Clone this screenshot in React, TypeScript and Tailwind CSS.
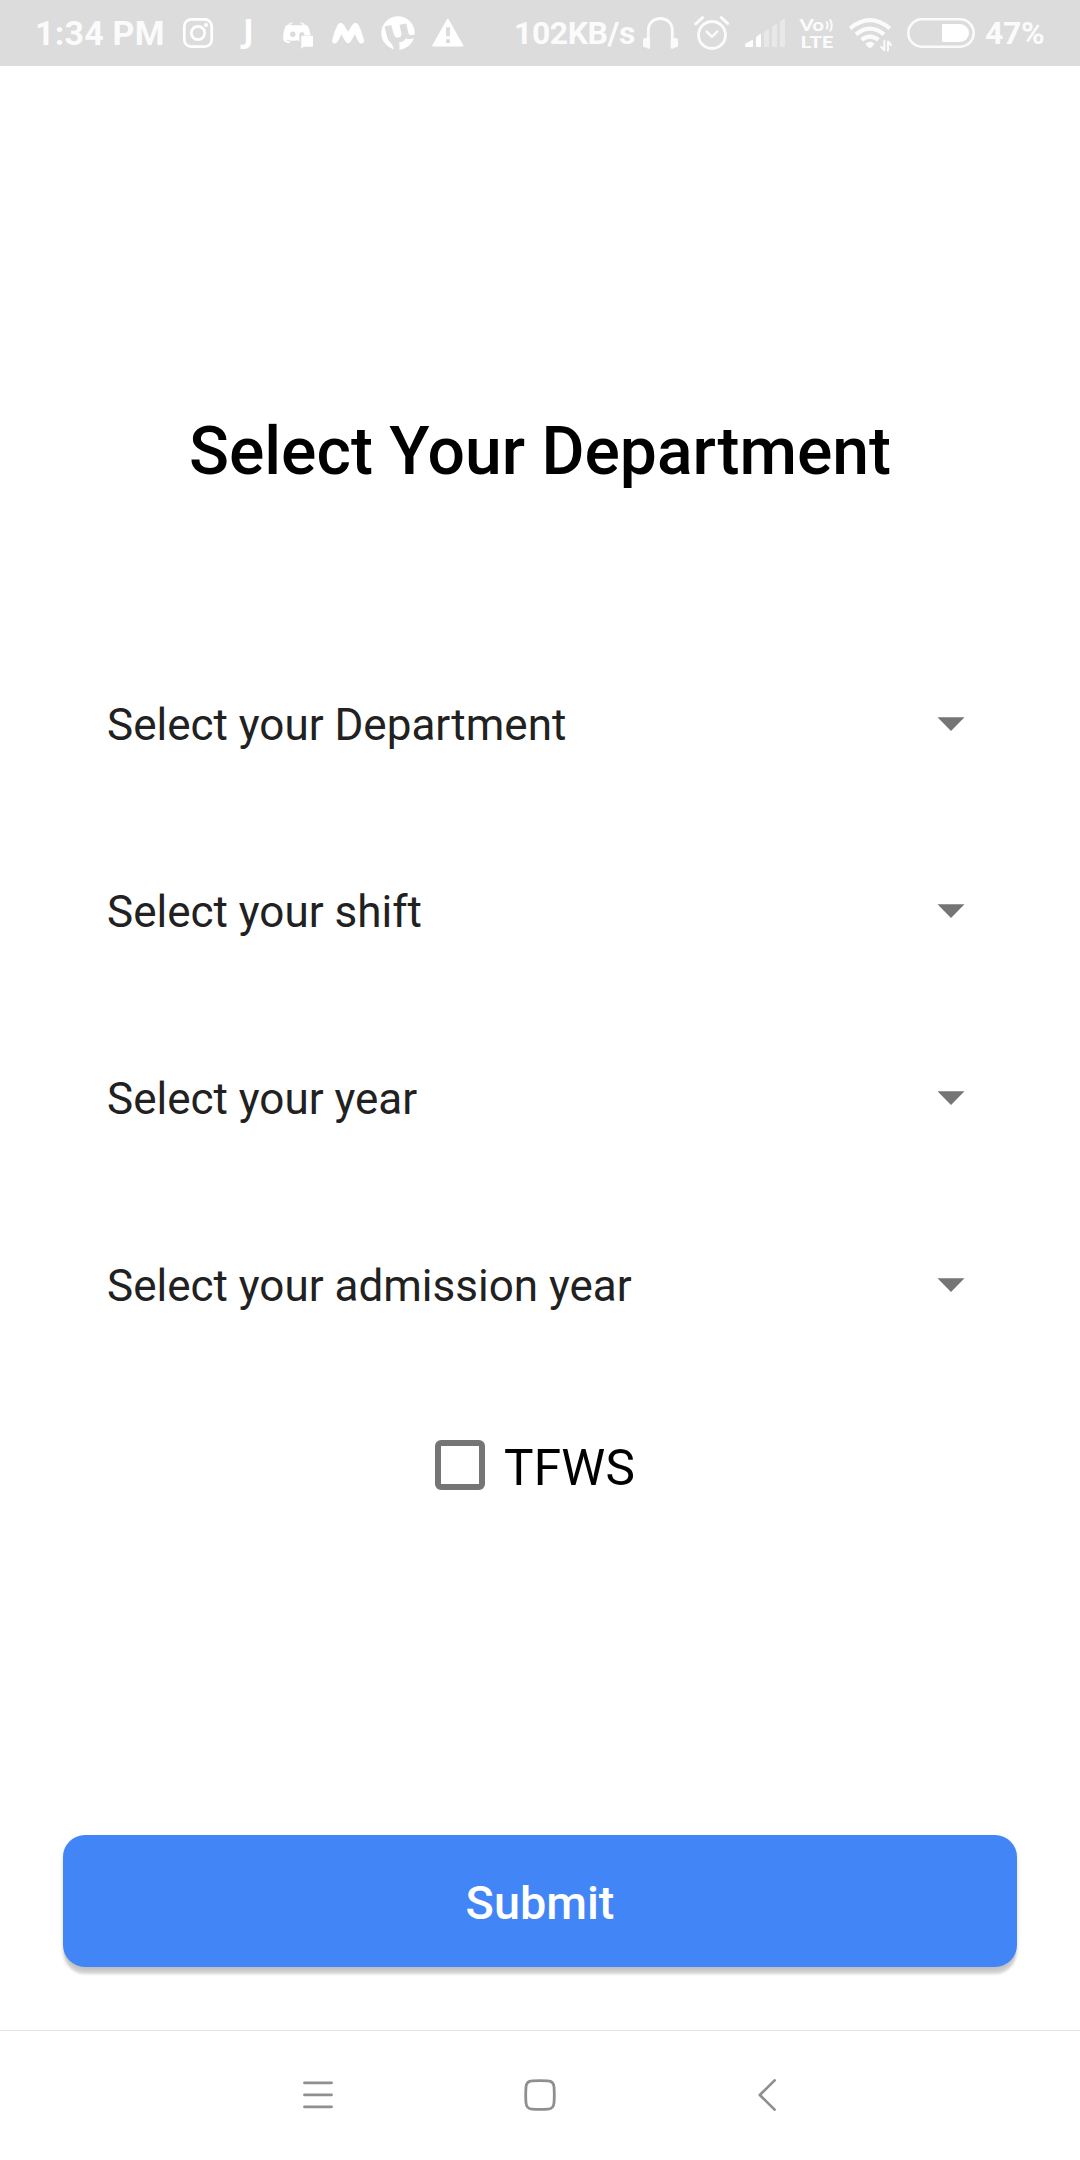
import type { ReactNode } from "react";

const BAR = "#dcdcdc";

/* Status bar glyph: `x` is the glyph's left edge on the 1080px wide bar. */
function Glyph({ x, w, children }: { x: number; w: number; children: ReactNode }) {
  return (
    <svg
      className="shrink-0"
      width={w}
      height={66}
      viewBox={`${x} 0 ${w} 66`}
      fill="none"
      stroke="none"
      strokeLinecap="round"
      strokeLinejoin="round"
      aria-hidden="true"
    >
      {children}
    </svg>
  );
}

function StatusBar() {
  return (
    <header className="flex h-[66px] shrink-0 items-center bg-[#dcdcdc] font-bold whitespace-nowrap text-[#fbfbfb]">
      <span className="w-[180px] shrink-0 pl-[35px] text-[34px] leading-[66px] tracking-[0.2px]">1:34 PM</span>

      <Glyph x={180} w={36}>
        <rect x="184.3" y="19.3" width="27.4" height="27.4" rx="7" stroke="#fff" strokeWidth="2.7" />
        <circle cx="198" cy="33" r="6.7" stroke="#fff" strokeWidth="2.7" />
        <circle cx="206" cy="25" r="2" fill="#fff" />
      </Glyph>
      <span className="w-[60px] shrink-0 pl-[27px] font-['Open_Sans',sans-serif] text-[33px] leading-[50px] -mt-[6px] text-white">J</span>
      <Glyph x={276} w={48}>
        <path
          d="M290 24.2 C287.5 24.6 286 25.4 285.4 26.6 C283.6 30.5 283 35 283.2 40 C284.5 42 286.8 43 289.4 43.3 L291.3 40.8 H300 V35.6 H310.4 C310.2 32 309.4 29 307.9 26.2 C306.6 25.1 304.7 24.4 302.5 24 L301.5 25.3 H291.5 Z"
          fill="#fff"
        />
        <path d="M289.5 23.6 L292.5 22.9 M303.5 23.6 L300.5 22.9" stroke="#fff" strokeWidth="1" />
        <circle cx="292.8" cy="34.2" r="2.7" fill={BAR} />
        <path d="M299.3 41 V34.5 C299.3 31.2 303.8 31 304.4 34 V36 Z" fill={BAR} />
        <path d="M302 35.8 H312.3 Q313 35.8 313 36.5 V46 Q313 46.7 312.3 46.7 H303.6 L301.3 49 V36.5 Q301.3 35.8 302 35.8 Z" fill="#fff" />
        <path d="M287.5 40.2 Q292.5 42.5 297.5 40.8" stroke={BAR} strokeWidth="1.1" />
      </Glyph>
      <Glyph x={324} w={48}>
        <path
          d="M337.6 25 Q340.8 20.2 344.2 25.2 L348.1 31.8 L352 25.2 Q355.4 20.2 358.6 25 Q362 31.5 364 40.2 Q364.2 43.6 361.3 43.4 Q359.2 43.2 357.7 40.2 L354.9 34.2 L350.9 41.2 Q348.1 45.4 345.3 41.2 L341.3 34.2 L338.5 40.2 Q337 43.2 334.9 43.4 Q332 43.6 332.2 40.2 Q334.2 31.5 337.6 25 Z"
          fill="#fff"
        />
      </Glyph>
      <Glyph x={372} w={52}>
        <circle cx="398" cy="33" r="16.7" fill="#fff" />
        <path
          d="M384.5 26.5 L391.2 25.1 L394 34.8 Q395.2 38.4 398.7 37.6 Q402 36.7 401.4 33.3 L399.5 24.8 L406.2 23.4 L408.6 33.8 Q409.3 36.3 415.5 34.2 L415.2 37.4 Q410.2 40.2 405.8 38.4 Q403.6 42 399.2 42.2 Q400 46.4 399.2 50.4 L394 50 Q393 44.8 390.2 42.6 Q388 40.7 387.2 37 Z"
          fill={BAR}
        />
      </Glyph>
      <Glyph x={424} w={88}>
        <path d="M447.8 19.5 L462.7 45.8 H432.9 Z" fill="#fff" stroke="#fff" strokeWidth="1.6" />
        <path d="M446 27.3 H450 V36.3 H446 Z M446 39.2 H450 V43 H446 Z" fill={BAR} />
      </Glyph>

      <span className="w-[128px] shrink-0 pl-[2px] text-[32px] leading-[66px] tracking-[-0.45px]">102KB/s</span>
      <Glyph x={640} w={42}>
        <path d="M648.3 40 V30.5 C648.3 23.4 653.5 18.5 660.3 18.5 C667.2 18.5 672.3 23.4 672.3 30.5 V40" stroke="#fbfbfb" strokeWidth="2.8" />
        <rect x="646.9" y="37.5" width="3.2" height="11.3" rx="1.5" fill="#fbfbfb" />
        <rect x="670.7" y="37.5" width="3.2" height="11.3" rx="1.5" fill="#fbfbfb" />
        <rect x="643" y="38" width="6" height="9.4" rx="2.5" fill="#fbfbfb" />
        <rect x="672" y="38" width="6" height="9.4" rx="2.5" fill="#fbfbfb" />
      </Glyph>
      <Glyph x={682} w={58}>
        <circle cx="712" cy="35" r="13.5" stroke="#fbfbfb" strokeWidth="2.9" />
        <path d="M706.7 31.7 L711.9 36.8 L717.2 31.7" stroke="#fbfbfb" strokeWidth="2.5" />
        <path d="M695.6 24 L702.6 17.6 M727.6 23.4 L721.3 17.6" stroke="#fbfbfb" strokeWidth="3" />
      </Glyph>
      <Glyph x={740} w={50}>
        <path d="M745 45.5 Q745 44.2 746.2 43.3 L751.5 40.2 Q753 39.5 753 41 V46 Q753 47 752 47 H746 Q745 47 745 46 Z" fill="#fff" />
        <path d="M756 38.6 Q756 37 757.3 36 L759.7 34.3 Q761 33.5 761 35 V46 Q761 47 760 47 H757 Q756 47 756 46 Z" fill="#fff" />
        <g fill="#e8e8e8">
          <path d="M764 33 Q764 31.8 765 31 L767.7 29.2 Q769 28.5 769 30 V46 Q769 47 768 47 H765 Q764 47 764 46 Z" />
          <path d="M772 28 Q772 26.8 773 26 L775.7 24 Q777 23.2 777 24.7 V46 Q777 47 776 47 H773 Q772 47 772 46 Z" />
          <path d="M780 23 Q780 21.6 781 20.8 L783.7 18.7 Q785 18 785 19.5 V46 Q785 47 784 47 H781 Q780 47 780 46 Z" />
        </g>
      </Glyph>
      <Glyph x={790} w={50}>
        <text x="799.6" y="30.6" fontFamily="Lato, sans-serif" fontWeight="900" fontSize="17" textLength="24.5" lengthAdjust="spacingAndGlyphs" fill="#fbfbfb">Vo</text>
        <text x="800.6" y="48" fontFamily="Lato, sans-serif" fontWeight="900" fontSize="17.5" textLength="33" lengthAdjust="spacingAndGlyphs" fill="#fbfbfb">LTE</text>
        <path d="M826.8 22.3 Q828.6 25.3 826.8 28.5 M830.2 20 Q833.4 25.3 830.2 30.8" stroke="#fbfbfb" strokeWidth="2" />
      </Glyph>
      <Glyph x={840} w={60}>
        <g stroke="#fbfbfb" strokeWidth="4.2" strokeLinecap="butt">
          <path d="M850.2 28.3 Q870 12 889.8 28.3" />
          <path d="M856 34.3 Q870 23 884 34.3" />
          <path d="M861.6 39.8 Q870 33.3 878.4 39.8" />
        </g>
        <path d="M865.4 43.7 Q870 40 874.6 43.7 Q872 47.6 870 48 Q868 47.6 865.4 43.7 Z" fill="#fbfbfb" />
        <path d="M884.3 41 V50.2 L881.2 46.8 M888 50.5 V41.5 L891 45" stroke="#fbfbfb" strokeWidth="2" />
      </Glyph>
      <Glyph x={900} w={80}>
        <rect x="908.3" y="19.3" width="65.4" height="27.4" rx="13.7" stroke="#fbfbfb" strokeWidth="2.6" />
        <path d="M943.3 24 H960 A9 9 0 0 1 960 42 H943.3 Q942 42 942 40.7 V25.3 Q942 24 943.3 24 Z" fill="#fff" />
      </Glyph>
      <span className="w-[100px] shrink-0 pl-[5px] text-[32px] leading-[66px] tracking-[-0.4px]">47%</span>
    </header>
  );
}

function Spinner({ label }: { label: string }) {
  return (
    <button type="button" className="flex h-[187px] w-full items-center justify-between pr-[115px] pl-[107px] text-left">
      <span className="text-[44px] leading-[52px] text-[#212121]">{label}</span>
      <svg className="mb-[2px]" width="28" height="14" viewBox="0 0 28 14" aria-hidden="true">
        <path d="M0.5 0.3 H27.5 L14 14 Z" fill="#757575" />
      </svg>
    </button>
  );
}

const fields = ["Select your Department", "Select your shift", "Select your year", "Select your admission year"];

function NavigationBar() {
  return (
    <nav className="flex h-[130px] shrink-0 items-center border-t border-[#e4e4e4] pb-px pl-[303px]">
      <svg width="30" height="32" viewBox="0 0 30 32" fill="none" stroke="#8f8f8f" strokeWidth="2.7" strokeLinecap="round" aria-hidden="true">
        <path d="M1.4 3.8 H28.6 M1.4 15.8 H28.6 M1.4 27.8 H28.6" />
      </svg>
      <svg className="ml-[191px]" width="32" height="32" viewBox="0 0 32 32" fill="none" stroke="#8f8f8f" strokeWidth="2.8" aria-hidden="true">
        <path d="M8 1.9 Q16 1.2 24 1.9 Q29.5 2.2 30 8 Q30.6 16 30 24 Q29.5 29.8 24 30.1 Q16 30.8 8 30.1 Q2.5 29.8 2 24 Q1.4 16 2 8 Q2.5 2.2 8 1.9 Z" />
      </svg>
      <svg className="ml-[202px]" width="18" height="32" viewBox="0 0 18 32" fill="none" stroke="#8f8f8f" strokeWidth="2.7" strokeLinecap="round" strokeLinejoin="round" aria-hidden="true">
        <path d="M16.6 1.4 L1.8 16 L16.6 30.6" />
      </svg>
    </nav>
  );
}

export default function App() {
  return (
    <div className="flex h-[2160px] w-[1080px] flex-col overflow-hidden bg-white font-['Roboto',sans-serif]">
      <StatusBar />
      <main className="flex flex-1 flex-col">
        <h1 className="mt-[347px] text-center text-[66px] leading-[78px] font-medium text-black">Select Your Department</h1>
        <div className="mt-[140px]">
          {fields.map((label) => (
            <Spinner key={label} label={label} />
          ))}
        </div>
        <label className="mt-[56px] flex h-[60px] items-center pl-[435px]">
          <input type="checkbox" className="size-[50px] appearance-none rounded-[6px] border-[6px] border-[#757575] bg-white" />
          <span className="ml-[19px] pt-[5px] text-[49.5px] leading-[60px] tracking-[0.2px] text-black">TFWS</span>
        </label>
        <button
          type="button"
          className="mx-[63px] mt-[340px] h-[132px] rounded-[22px] bg-[#4285f6] pt-[4px] text-[46.75px] leading-[56px] font-medium text-white shadow-[0_8px_3px_-1px_rgba(0,0,0,0.16),0_3px_5px_0_rgba(0,0,0,0.12)]"
        >
          Submit
        </button>
      </main>
      <NavigationBar />
    </div>
  );
}
